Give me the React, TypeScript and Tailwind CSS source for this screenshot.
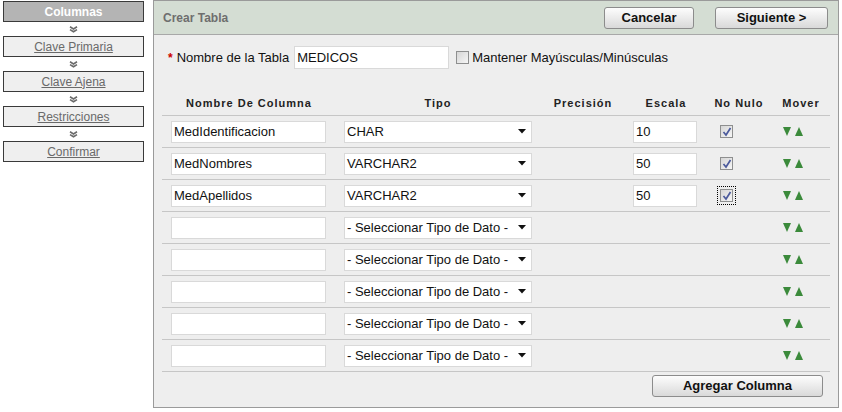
import React from "react";

const font = { fontFamily: '"Liberation Sans", Arial, sans-serif' };

function DoubleChevron() {
  return (
    <svg width="9" height="7" viewBox="0 0 9 7" className="block">
      <polyline points="1,0.8 4.5,3 8,0.8" fill="none" stroke="#6b6b6b" strokeWidth="1.6" />
      <polyline points="1,3.6 4.5,5.8 8,3.6" fill="none" stroke="#6b6b6b" strokeWidth="1.6" />
    </svg>
  );
}

function StepBox({ label, active }: { label: string; active?: boolean }) {
  if (active) {
    return (
      <div className="h-[21px] w-[141px] border border-[#3a3a3a] bg-[#b4b4b4] flex items-center justify-center text-[12px] font-bold text-white">
        {label}
      </div>
    );
  }
  return (
    <div className="h-[21px] w-[141px] border border-[#3a3a3a] bg-[#efefef] flex items-center justify-center text-[12px] text-[#6a6a6a] underline">
      {label}
    </div>
  );
}

function Btn({ label, w }: { label: string; w: string }) {
  return (
    <div
      className={`${w} h-[22px] rounded-[3px] border border-[#8c8c8c] bg-gradient-to-b from-[#fdfdfd] to-[#d9d9d9] flex items-center justify-center text-[13px] font-bold text-[#111]`}
    >
      {label}
    </div>
  );
}

function Check({ checked, focus }: { checked?: boolean; focus?: boolean }) {
  return (
    <div className={focus ? "w-fit outline outline-1 outline-dotted outline-black outline-offset-[2px]" : "w-fit"}>
      <div className="w-[13px] h-[13px] border border-[#8e8f8f] bg-gradient-to-br from-[#d6d6d6] to-[#f6f6f6] flex items-center justify-center">
        {checked && (
          <svg width="10" height="10" viewBox="0 0 10 10">
            <polyline points="1.5,5 4,8 8.5,1" fill="none" stroke="#4b5a9c" strokeWidth="1.7" />
          </svg>
        )}
      </div>
    </div>
  );
}

function TextBox({ value, w }: { value: string; w: string }) {
  return (
    <div className={`${w} h-[22px] bg-white border border-[#d9d9d9] flex items-center pl-[2px] text-[13px] text-[#111]`}>
      {value}
    </div>
  );
}

function SelectBox({ value }: { value: string }) {
  return (
    <div className="w-[188px] h-[22px] bg-white border border-[#d9d9d9] flex items-center justify-between pl-[2px] pr-[5px] text-[13px] text-[#111]">
      <span>{value}</span>
      <svg width="8" height="5" viewBox="0 0 8 5">
        <polygon points="0,0 8,0 4,4.5" fill="#111" />
      </svg>
    </div>
  );
}

function Arrows() {
  return (
    <div className="flex items-center gap-[4px]">
      <svg width="8" height="9" viewBox="0 0 8 9">
        <polygon points="0,0 8,0 4,9" fill="#3b8a3b" />
      </svg>
      <svg width="8" height="9" viewBox="0 0 8 9">
        <polygon points="0,9 8,9 4,0" fill="#3b8a3b" />
      </svg>
    </div>
  );
}

type Row = { name: string; type: string; escala?: string; nn?: boolean; focus?: boolean };

const rows: Row[] = [
  { name: "MedIdentificacion", type: "CHAR", escala: "10", nn: true },
  { name: "MedNombres", type: "VARCHAR2", escala: "50", nn: true },
  { name: "MedApellidos", type: "VARCHAR2", escala: "50", nn: true, focus: true },
  { name: "", type: "- Seleccionar Tipo de Dato -" },
  { name: "", type: "- Seleccionar Tipo de Dato -" },
  { name: "", type: "- Seleccionar Tipo de Dato -" },
  { name: "", type: "- Seleccionar Tipo de Dato -" },
  { name: "", type: "- Seleccionar Tipo de Dato -" },
];

export default function App() {
  return (
    <div style={font} className="w-[842px] h-[412px] bg-white flex">
      {/* Sidebar */}
      <div className="w-[153px] pl-[3px] pt-[1px] flex flex-col">
        {["Columnas", "Clave Primaria", "Clave Ajena", "Restricciones", "Confirmar"].map((s, i) => (
          <div key={s} className="flex flex-col">
            {i > 0 && (
              <div className="h-[14px] w-[141px] flex items-center justify-center">
                <DoubleChevron />
              </div>
            )}
            <StepBox label={s} active={i === 0} />
          </div>
        ))}
      </div>

      {/* Main panel */}
      <div className="w-[686px] h-[408px] border border-[#9a9a9a] bg-[#eeeeee] flex flex-col">
        <div className="h-[34px] bg-[#d4ddd3] border-b border-[#a8a8a8] flex items-center justify-between pl-[9px] pr-[10px]">
          <span className="text-[12px] font-bold text-[#6e6e6e]">Crear Tabla</span>
          <div className="flex items-center gap-[21px]">
            <Btn label="Cancelar" w="w-[90px]" />
            <Btn label="Siguiente >" w="w-[113px]" />
          </div>
        </div>

        <div className="mt-[11px] flex items-center pl-[14px] text-[13px] text-[#111]">
          <span className="text-[#cc0000] text-[12px] font-bold mr-[4px] leading-none">*</span>
          <span>Nombre de la Tabla</span>
          <div className="ml-[5px] w-[155px] h-[23px] bg-white border border-[#d9d9d9] flex items-center pl-[2px] text-[13px]">
            MEDICOS
          </div>
          <div className="ml-[7px]">
            <Check />
          </div>
          <span className="ml-[3px]">Mantener Mayúsculas/Minúsculas</span>
        </div>

        {/* Table */}
        <div className="mt-[22px] ml-[8px] w-[668px] flex flex-col">
          <div className="h-[25px] border-b border-[#c6c6c6] flex items-center pt-[1px] text-[11px] font-bold tracking-[1px] text-[#222]">
            <div className="w-[174px] text-center">Nombre De Columna</div>
            <div className="w-[204px] text-center">Tipo</div>
            <div className="w-[86px] text-center">Precisión</div>
            <div className="w-[80px] text-center">Escala</div>
            <div className="w-[66px] text-center">No Nulo</div>
            <div className="w-[58px] text-center">Mover</div>
          </div>
          {rows.map((r, i) => (
            <div key={i} className="h-[32px] border-b border-[#c6c6c6] flex items-center">
              <div className="w-[174px] pl-[9px]">
                <TextBox value={r.name} w="w-[155px]" />
              </div>
              <div className="w-[204px] pl-[8px]">
                <SelectBox value={r.type} />
              </div>
              <div className="w-[86px]" />
              <div className="w-[80px] pl-[7px]">
                {r.escala && <TextBox value={r.escala} w="w-[64px]" />}
              </div>
              <div className="w-[66px] pl-[14px]">{r.nn && <Check checked focus={r.focus} />}</div>
              <div className="w-[58px] pl-[11px]">
                <Arrows />
              </div>
            </div>
          ))}
          <div className="flex justify-end pr-[7px] mt-[3px]">
            <Btn label="Agregar Columna" w="w-[171px]" />
          </div>
        </div>
      </div>
    </div>
  );
}
